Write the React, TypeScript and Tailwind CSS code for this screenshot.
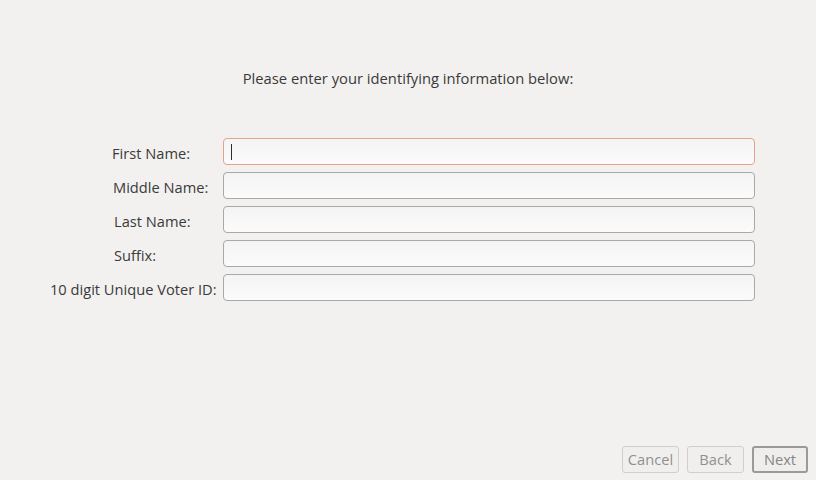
import React from 'react';

const fields = [
  { label: 'First Name:', pad: 'pl-[62px]', focused: true },
  { label: 'Middle Name:', pad: 'pl-[63px]', focused: false },
  { label: 'Last Name:', pad: 'pl-[64px]', focused: false },
  { label: 'Suffix:', pad: 'pl-[64px]', focused: false },
  { label: '10 digit Unique Voter ID:', pad: 'pl-0', focused: false },
];

const App = () => {
  return (
    <div
      className="w-[816px] h-[480px] bg-[#f2f1f0] text-[#3a3a3a] flex flex-col"
      style={{ fontFamily: '"Open Sans", "Noto Sans", sans-serif' }}
    >
      <div className="pt-[69px] text-center text-[14.75px] leading-[19px]">
        Please enter your identifying information below:
      </div>

      <div className="mt-[50px] pl-[50px] grid grid-cols-[169px_532px] gap-x-[4px] gap-y-[7px]">
        {fields.map((f, i) => (
          <React.Fragment key={i}>
            <div className={`flex items-center pt-[4px] text-[14.65px] leading-[19px] whitespace-nowrap ${f.pad}`}>
              {f.label}
            </div>
            <div
              className={`relative h-[27px] rounded-[4px] border bg-gradient-to-b from-[#f4f4f4] to-[#fbfbfb] ${
                f.focused ? 'border-[#e5a38c]' : 'border-[#a9a9a9]'
              }`}
            >
              {f.focused && (
                <div className="absolute left-[7px] top-[5px] w-[1px] h-[16px] bg-[#2e2e2e]" />
              )}
            </div>
          </React.Fragment>
        ))}
      </div>

      <div className="flex-1" />

      <div className="flex justify-end gap-[8px] pr-[8px] pb-[7px] text-[14.65px]">
        <button className="w-[57px] h-[27px] rounded-[3px] border border-[#cfcfcf] bg-[#f0efee] text-[#8f8f8f]">
          Cancel
        </button>
        <button className="w-[57px] h-[27px] rounded-[3px] border border-[#cfcfcf] bg-[#f0efee] text-[#8f8f8f]">
          Back
        </button>
        <button className="w-[56px] h-[27px] rounded-[3px] border-2 border-[#9a9a9a] bg-[#efeeed] text-[#858585]">
          Next
        </button>
      </div>
    </div>
  );
};

export default App;
